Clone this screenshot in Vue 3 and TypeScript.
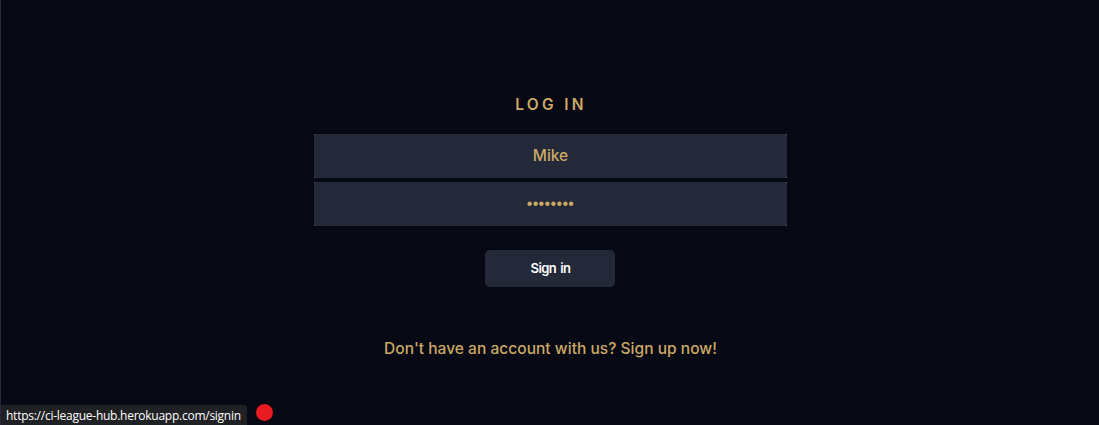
<script setup lang="ts">
import { ref } from 'vue'

const username = ref<string>('Mike')
const password = ref<string>('password')
</script>

<template>
  <main class="page">
    <form class="login" @submit.prevent>
      <h1 class="title">LOG IN</h1>
      <div class="field"><input v-model="username" class="input" type="text" aria-label="Username" /></div>
      <div class="field"><input v-model="password" class="input secret" type="password" aria-label="Password" /></div>
      <button class="submit" type="submit">Sign in</button>
      <a class="signup">Don't have an account with us? Sign up now!</a>
    </form>
    <div class="status">https://ci-league-hub.herokuapp.com/signin</div>
    <span class="dot"></span>
  </main>
</template>

<style>
body {
  margin: 0;
  background: #060813;
}
</style>

<style scoped>
.page {
  position: relative;
  box-sizing: border-box;
  width: 100%;
  height: 425px;
  overflow: hidden;
  border-left: 1px solid #2a263c;
  background: #060813;
  color: #cca966;
  font-family: Inter, 'Open Sans', sans-serif;
}
.login {
  display: flex;
  flex-direction: column;
  align-items: center;
  padding-top: 95px;
}
.title {
  margin: 0 0 19px;
  padding-left: 2px;
  height: 20px;
  line-height: 20px;
  font-size: 15.5px;
  font-weight: 600;
  letter-spacing: 3.3px;
  white-space: nowrap;
}
.field {
  width: 473px;
  height: 44px;
  margin: 0 0 4px 1px;
  background: #5c606a;
}
.input {
  display: block;
  box-sizing: border-box;
  width: 473px;
  height: 44px;
  padding: 0;
  border: 0;
  border-radius: 2px;
  outline: none;
  background: #232938;
  color: #cca966;
  font: 500 15.5px/44px Inter, sans-serif;
  text-align: center;
}
.secret {
  font: 16px/44px 'Liberation Sans', sans-serif;
  letter-spacing: 0.35px;
}
.submit {
  width: 130px;
  height: 37px;
  margin: 20px 0 0;
  padding: 0 0 0 1px;
  border: 0;
  border-radius: 5px;
  background: #232938;
  color: #fff;
  font: 600 13px/37px Inter, sans-serif;
  letter-spacing: -0.6px;
  word-spacing: 1.5px;
}
.signup {
  margin-top: 51px;
  padding-left: 1px;
  font-size: 15.5px;
  font-weight: 500;
  line-height: 22px;
  letter-spacing: 0.03px;
  white-space: nowrap;
}
.status {
  position: absolute;
  left: 0;
  bottom: 0;
  box-sizing: border-box;
  width: 246px;
  height: 20px;
  padding-left: 5px;
  border-top-right-radius: 3px;
  background: #202124;
  color: #fff;
  font: 12px/21px 'Open Sans', 'Noto Sans', sans-serif;
  letter-spacing: -0.255px;
  white-space: nowrap;
}
.dot {
  position: absolute;
  left: 254.5px;
  top: 403.5px;
  width: 17px;
  height: 17px;
  border-radius: 50%;
  background: #e81b1f;
}
</style>
